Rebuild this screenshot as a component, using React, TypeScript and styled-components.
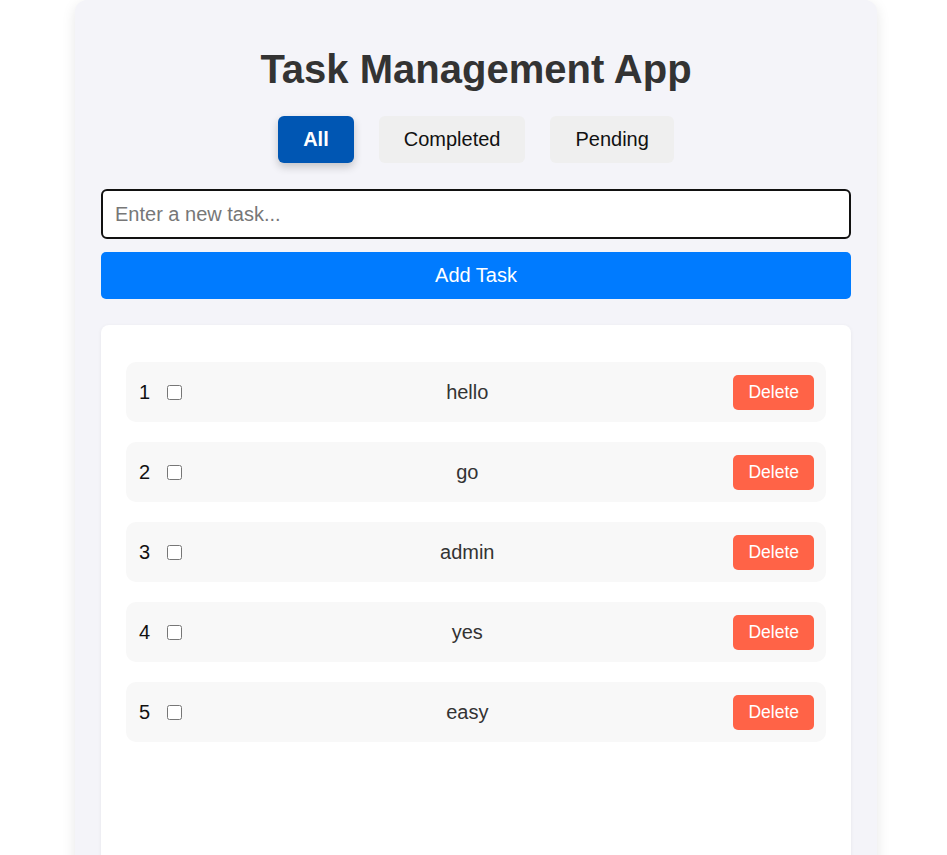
import React, { useState } from "react";
import styled, { createGlobalStyle } from "styled-components";

const GlobalStyle = createGlobalStyle`
  html, body {
    margin: 0;
    padding: 0;
    background: #ffffff;
    font-family: "Liberation Sans", Arial, sans-serif;
  }
  body {
    padding-left: 5px;
  }
  * { box-sizing: border-box; }
`;

const Container = styled.div`
  width: 802px;
  margin: 0 auto;
  min-height: 900px;
  padding: 22px 26px 0;
  background: #f4f4f9;
  border-radius: 12px;
  box-shadow: 0 4px 14px rgba(0, 0, 0, 0.1);
`;

const Title = styled.h1`
  margin: 24px 0 24px;
  text-align: center;
  font-size: 40px;
  font-weight: bold;
  color: #333333;
  line-height: 46px;
`;

const FilterBar = styled.div`
  display: flex;
  justify-content: center;
  gap: 25px;
  margin-bottom: 26px;
`;

const FilterButton = styled.button<{ $active?: boolean }>`
  height: 47px;
  padding: 0 25px;
  font-family: inherit;
  font-size: 20px;
  font-weight: ${(p) => (p.$active ? "bold" : "normal")};
  color: ${(p) => (p.$active ? "#ffffff" : "#111111")};
  background: ${(p) => (p.$active ? "#0056b3" : "#efefef")};
  border: none;
  border-radius: 6px;
  box-shadow: ${(p) => (p.$active ? "0 4px 8px rgba(0, 0, 0, 0.2)" : "none")};
  cursor: pointer;
`;

const TaskInput = styled.input`
  display: block;
  width: 100%;
  height: 50px;
  padding: 0 12px;
  font-family: inherit;
  font-size: 20px;
  color: #222;
  background: #ffffff;
  border: 2px solid #111111;
  border-radius: 6px;
  outline: none;
  &::placeholder {
    color: #777777;
  }
`;

const AddButton = styled.button`
  display: block;
  width: 100%;
  height: 47px;
  margin-top: 13px;
  font-family: inherit;
  font-size: 20px;
  color: #ffffff;
  background: #007bff;
  border: none;
  border-radius: 5px;
  cursor: pointer;
`;

const ListCard = styled.div`
  margin-top: 26px;
  min-height: 560px;
  padding: 37px 25px 25px;
  background: #ffffff;
  border-radius: 8px;
  box-shadow: 0 1px 4px rgba(0, 0, 0, 0.06);
`;

const TaskList = styled.ul`
  list-style: none;
  margin: 0;
  padding: 0;
  display: flex;
  flex-direction: column;
  gap: 20px;
`;

const TaskRow = styled.li`
  display: flex;
  align-items: center;
  height: 60px;
  padding: 0 12px 0 13px;
  background: #f8f8f8;
  border-radius: 10px;
`;

const TaskNumber = styled.span`
  font-size: 20px;
  color: #111111;
  min-width: 11px;
`;

const TaskCheck = styled.input`
  width: 15px;
  height: 15px;
  margin: 0 0 0 17px;
`;

const TaskText = styled.span`
  flex: 1;
  margin-left: 19px;
  text-align: center;
  font-size: 20px;
  color: #333333;
`;

const DeleteButton = styled.button`
  height: 35px;
  padding: 0 15px;
  font-family: inherit;
  font-size: 17.5px;
  color: #ffffff;
  background: #ff6347;
  border: none;
  border-radius: 5px;
  cursor: pointer;
`;

const initialTasks = ["hello", "go", "admin", "yes", "easy"];

export default function App() {
  const [tasks] = useState(initialTasks);
  return (
    <>
      <GlobalStyle />
      <Container>
        <Title>Task Management App</Title>
        <FilterBar>
          <FilterButton $active>All</FilterButton>
          <FilterButton>Completed</FilterButton>
          <FilterButton>Pending</FilterButton>
        </FilterBar>
        <TaskInput placeholder="Enter a new task..." />
        <AddButton>Add Task</AddButton>
        <ListCard>
          <TaskList>
            {tasks.map((t, i) => (
              <TaskRow key={t}>
                <TaskNumber>{i + 1}</TaskNumber>
                <TaskCheck type="checkbox" />
                <TaskText>{t}</TaskText>
                <DeleteButton>Delete</DeleteButton>
              </TaskRow>
            ))}
          </TaskList>
        </ListCard>
      </Container>
    </>
  );
}
